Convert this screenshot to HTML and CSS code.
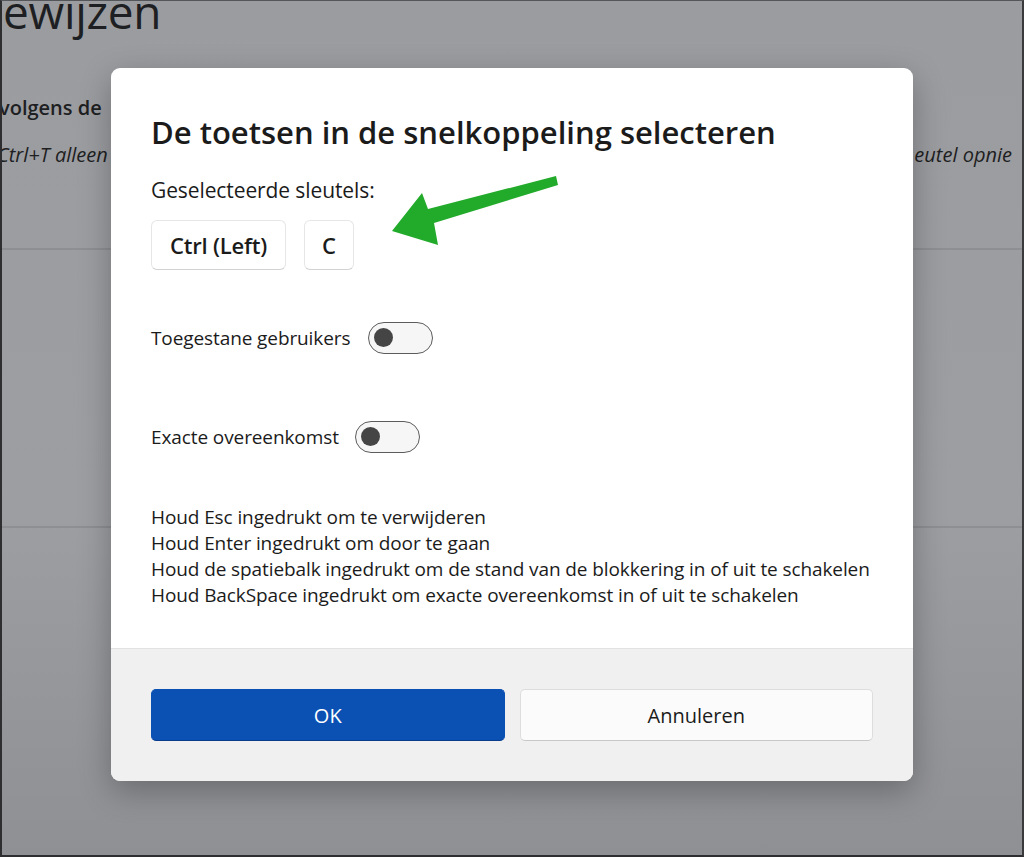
FILE: index.html
```html
<!DOCTYPE html>
<html lang="nl">
<head>
<meta charset="utf-8">
<title>Snelkoppeling</title>
<link rel="stylesheet" href="styles.css">
</head>
<body>
<div class="screen">
  <div class="page">
    <div class="page-title">ewijzen</div>
    <div class="page-card">
      <div class="page-row1">volgens de</div>
      <div class="page-row2"><span>Ctrl+T alleen</span><span>eutel opnie</span></div>
    </div>
    <div class="page-sep"></div>
    <div class="page-sep second"></div>
  </div>

  <div class="dialog">
    <div class="dialog-body">
      <h1 class="dialog-title">De toetsen in de snelkoppeling selecteren</h1>
      <div class="sel-label">Geselecteerde sleutels:</div>
      <div class="keys">
        <div class="key">Ctrl (Left)</div>
        <div class="key">C</div>
      </div>
      <div class="toggle-row first">
        <span class="toggle-label">Toegestane gebruikers</span>
        <span class="toggle"><span class="knob"></span></span>
      </div>
      <div class="toggle-row second">
        <span class="toggle-label">Exacte overeenkomst</span>
        <span class="toggle"><span class="knob"></span></span>
      </div>
      <div class="hints">
        <div>Houd Esc ingedrukt om te verwijderen</div>
        <div>Houd Enter ingedrukt om door te gaan</div>
        <div>Houd de spatiebalk ingedrukt om de stand van de blokkering in of uit te schakelen</div>
        <div>Houd BackSpace ingedrukt om exacte overeenkomst in of uit te schakelen</div>
      </div>
    </div>
    <div class="dialog-footer">
      <button class="btn primary">OK</button>
      <button class="btn">Annuleren</button>
    </div>
  </div>

  <svg class="arrow" width="1024" height="857" viewBox="0 0 1024 857">
    <polygon points="392,231 422,193 428,209 556,176 558,185 434,223 438,245" fill="#22aa2a"/>
  </svg>
</div>
</body>
</html>
```

FILE: styles.css
```css
* { box-sizing: border-box; }
html, body { margin: 0; padding: 0; }
body {
  font-family: "Open Sans", "Noto Sans", "Liberation Sans", sans-serif;
  color: #1b1b1b;
}
.screen {
  position: relative;
  width: 1024px;
  height: 857px;
  overflow: hidden;
  background: linear-gradient(180deg, #9b9ca0 0%, #9d9ea2 60%, #8f9094 100%);
  border-left: 2px solid #2e2e30;
  border-right: 2px solid #3a3a3c;
  border-top: 1px solid #55565a;
  border-bottom: 2px solid #2e2e30;
}
.page {
  color: #1e1f22;
}
.page-title {
  font-size: 46px;
  line-height: 46px;
  margin-top: -13px;
  padding-left: 1px;
  letter-spacing: -0.3px;
}
.page-card {
  margin-top: 61px;
}
.page-row1 {
  font-size: 20px;
  font-weight: 600;
  line-height: 26px;
  margin-left: -3px;
}
.page-row2 {
  display: flex;
  justify-content: space-between;
  margin-top: 21px;
  margin-right: 10px;
  font-size: 20px;
  font-style: italic;
  line-height: 26px;
  margin-left: -5px;
  white-space: nowrap;
}
.page-sep {
  height: 2px;
  background: #8e8f93;
  margin-top: 80px;
}
.page-sep.second {
  margin-top: 276px;
}

.dialog {
  position: absolute;
  left: 109px;
  top: 67px;
  width: 802px;
  height: 713px;
  background: #ffffff;
  border-radius: 9px;
  box-shadow: 0 10px 32px rgba(0,0,0,0.28);
  display: flex;
  flex-direction: column;
  overflow: hidden;
}
.dialog-body {
  flex: 1;
  padding: 45px 40px 0 40px;
}
.dialog-title {
  margin: 0;
  font-size: 31px;
  font-weight: 600;
  line-height: 38px;
  letter-spacing: 0;
  white-space: nowrap;
}
.sel-label {
  margin-top: 25px;
  font-size: 21px;
  line-height: 28px;
  letter-spacing: -0.1px;
}
.keys {
  display: flex;
  gap: 18px;
  margin-top: 16px;
}
.key {
  height: 50px;
  padding: 0 18px;
  border: 1px solid #e6e6e6;
  border-bottom-color: #d2d2d2;
  border-radius: 6px;
  background: #ffffff;
  font-size: 22px;
  font-weight: 600;
  display: flex;
  align-items: center;
  letter-spacing: -0.2px;
}
.key + .key { padding: 0 17px; }
.toggle-row {
  display: flex;
  align-items: center;
  height: 33px;
}
.toggle-row.first { margin-top: 51px; gap: 18px; }
.toggle-row.second { margin-top: 66px; gap: 16px; }
.toggle-label {
  font-size: 19px;
  letter-spacing: -0.1px;
}
.toggle {
  width: 65px;
  height: 32px;
  border: 1.5px solid #5c5c5c;
  border-radius: 16px;
  background: #f6f6f6;
  display: flex;
  align-items: center;
  padding-left: 5px;
}
.knob {
  width: 19px;
  height: 19px;
  border-radius: 50%;
  background: #454545;
}
.hints {
  margin-top: 51px;
  font-size: 19px;
  line-height: 26px;
  letter-spacing: -0.1px;
  white-space: nowrap;
}
.dialog-footer {
  height: 133px;
  background: #f0f0f0;
  border-top: 1px solid #e2e2e2;
  display: flex;
  gap: 15px;
  padding: 40px 40px 0 40px;
}
.btn {
  flex: 1;
  height: 52px;
  border-radius: 5px;
  font-family: inherit;
  font-size: 20px;
  border: 1px solid #dddddd;
  border-bottom-color: #c8c8c8;
  background: #fbfbfb;
  color: #1b1b1b;
}
.btn.primary {
  background: #0b50b3;
  border-color: #0b50b3;
  border-bottom-color: #083c8a;
  color: #ffffff;
}
.arrow {
  position: absolute;
  left: -2px;
  top: -1px;
}
```
